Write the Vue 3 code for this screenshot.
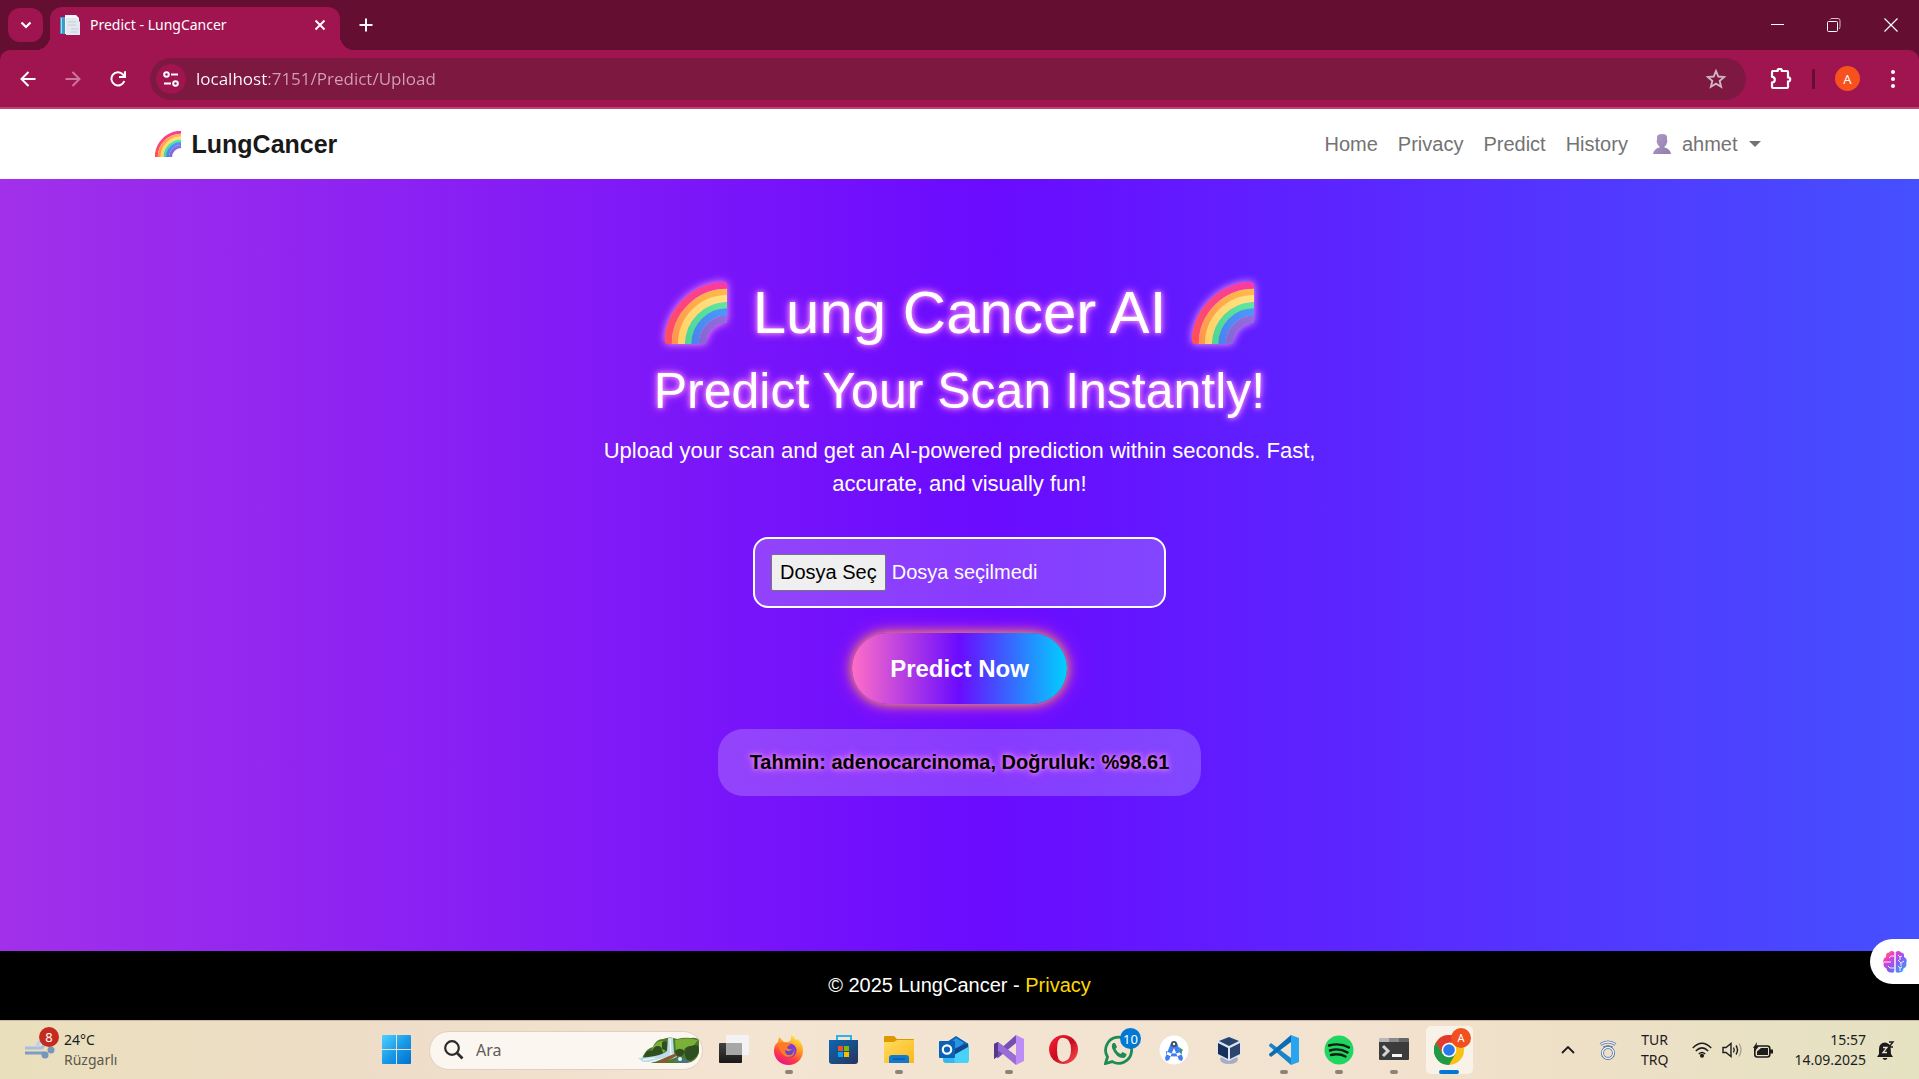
<script setup>
import { ref } from 'vue'

const address = ref('localhost:7151/Predict/Upload')
const query = ref('')
const links = ['Home', 'Privacy', 'Predict', 'History']
const bands = [
  { r: 57, id: 'bandRed', from: '#ff5058', to: '#f83aa8' },
  { r: 50, id: 'bandOrange', from: '#ff9250', to: '#ffbe4a' },
  { r: 44, id: 'bandYellow', from: '#ffd060', to: '#ffe488' },
  { r: 37, id: 'bandGreen', from: '#44d292', to: '#66eaa0' },
  { r: 31, id: 'bandBlue', from: '#4c78ea', to: '#4aa2ff' },
  { r: 24, id: 'bandViolet', from: '#7866cc', to: '#9c70e4' },
]
</script>

<template>
  <div class="screen">
    <svg class="defs" width="0" height="0" aria-hidden="true">
      <defs>
        <linearGradient v-for="b in bands" :id="b.id" :key="b.id" gradientUnits="userSpaceOnUse" x1="0" y1="60" x2="60" y2="0">
          <stop offset="0" :stop-color="b.from" /><stop offset="1" :stop-color="b.to" />
        </linearGradient>
        <symbol id="rainbow" viewBox="0 0 60 60">
          <circle v-for="b in bands" :key="b.id" cx="60" cy="60" :r="b.r" fill="none" :stroke="`url(#${b.id})`" stroke-width="7" />
        </symbol>
      </defs>
    </svg>

    <div class="tabstrip">
      <button class="tab-search" aria-label="Search tabs">
        <svg width="12" height="8" viewBox="0 0 12 8"><path d="M1.5 1.5 6 6l4.5-4.5" fill="none" stroke="#fff" stroke-width="2.2" /></svg>
      </button>
      <div class="tab">
        <svg width="20" height="20" viewBox="0 0 20 20">
          <path d="M0 2h8v17H0z" fill="#eef3f5" /><path d="M0 2h5v17H0z" fill="#3d9bc8" /><path d="M1 3h1v15H1z" fill="#a8d8ea" />
          <path d="M5 0h11l3 3v8H5z" fill="#f4f6f8" /><path d="M6 3h10l4 4v13H6z" fill="#e3e8ee" />
          <path d="M8 7h8M8 10h8M11 14h7M11 17h7" stroke="#c4ccd4" />
        </svg>
        <span class="tab-title">Predict - LungCancer</span>
        <button class="plain" aria-label="Close tab">
          <svg width="12" height="12" viewBox="0 0 12 12"><path d="m1.500 1.500 9 9m0-9-9 9" stroke="#fff" stroke-width="2" /></svg>
        </button>
      </div>
      <button class="plain new-tab" aria-label="New tab">
        <svg width="14" height="14" viewBox="0 0 14 14"><path d="M7 .5v13M.5 7h13" stroke="#fff" stroke-width="2" /></svg>
      </button>
      <div class="window-buttons">
        <button class="plain" aria-label="Minimize"><svg width="14" height="14" viewBox="0 0 14 14"><path d="M1 6.500h13" stroke="#fff" /></svg></button>
        <button class="plain" aria-label="Restore">
          <svg width="14" height="14" viewBox="0 0 14 14" fill="none" stroke="#fff"><rect x=".5" y="3.500" width="10" height="10" rx="1" /><path d="M3 1.500q.5-1 2-1h6q2 0 2 2v6q0 1.500-1 2.500" stroke="#dcb8c8" /></svg>
        </button>
        <button class="plain" aria-label="Close"><svg width="14" height="14" viewBox="0 0 14 14"><path d="m.5.5 13 13m0-13-13 13" stroke="#fff" stroke-width="1.200" /></svg></button>
      </div>
    </div>

    <div class="toolbar">
      <div class="toolbar-nav">
        <button class="plain" aria-label="Back"><svg width="16" height="16" viewBox="0 0 16 16" fill="none" stroke="#fff" stroke-width="2"><path d="M15.500 8H2M8.500 1 1.500 8l7 7" /></svg></button>
        <button class="plain" aria-label="Forward"><svg width="16" height="16" viewBox="0 0 16 16" fill="none" stroke="#cb769a" stroke-width="2"><path d="M.5 8H14M7.500 1l7 7-7 7" /></svg></button>
        <button class="plain" aria-label="Reload">
          <svg width="16" height="16" viewBox="0 0 16 16" fill="none" stroke="#fff" stroke-width="2"><path d="M14.300 10A6.600 6.600 0 1 1 13 3.500L14.500 5.500M15 .2V6H9" /></svg>
        </button>
      </div>
      <div class="omnibox">
        <button class="site-info" aria-label="Site information">
          <svg width="16" height="16" viewBox="0 0 16 16" fill="none" stroke="#fff" stroke-width="2"><circle cx="3.500" cy="3.500" r="2.300" /><path d="M8 3.500h7M1 12.500h7" /><circle cx="12.500" cy="12.500" r="2.300" /></svg>
        </button>
        <input v-model="address" class="address" type="text" aria-label="Address" spellcheck="false" />
        <button class="plain" aria-label="Bookmark this page">
          <svg width="20" height="20" viewBox="0 0 20 20"><path d="m10 2 2.300 5.500 6 .5-4.600 3.900 1.400 5.800L10 14.600l-5.100 3.100 1.400-5.800L1.700 8l6-.5z" fill="none" stroke="#cfb6c2" stroke-width="1.900" /></svg>
        </button>
      </div>
      <button class="plain" aria-label="Extensions">
        <svg width="22" height="22" viewBox="0 0 22 22"><path d="M2 3h5.500a2.200 2.200 0 0 1 4.400 0H17q1 0 1 1v5.300a2.200 2.200 0 0 1 0 4.400V19q0 1-1 1H3q-1 0-1-1v-4.300q2.800-.6 2.800-3T2 8.700V4q0-1 1-1" fill="none" stroke="#fff" stroke-width="2.200" /></svg>
      </button>
      <span class="divider"></span>
      <button class="avatar" aria-label="Profile">A</button>
      <button class="plain menu" aria-label="Menu">
        <svg width="6" height="20" viewBox="0 0 6 20" fill="#fff"><circle cx="3" cy="3" r="2" /><circle cx="3" cy="10" r="2" /><circle cx="3" cy="17" r="2" /></svg>
      </button>
    </div>

    <div class="page">
      <header class="site-header">
        <nav class="container">
          <a class="brand" href="#"><svg width="26" height="26"><use href="#rainbow" /></svg>LungCancer</a>
          <div class="nav-links">
            <a v-for="l in links" :key="l" href="#">{{ l }}</a>
            <button class="user" aria-haspopup="true">
              <svg width="20" height="20" viewBox="0 0 20 20"><defs><linearGradient id="person" x2="1" y2="1"><stop stop-color="#b09ac6" /><stop offset="1" stop-color="#927cac" /></linearGradient></defs><path d="M5 3q0-3 5-3t5 3v3q1 1 0 2.500-.5 3-2.500 4v1q5.500 1 6.500 6.500H1q1-5.500 6.500-6.500v-1Q5.500 11.500 5 8.500 4 7 5 6z" fill="url(#person)" /></svg>
              ahmet
              <span class="caret"></span>
            </button>
          </div>
        </nav>
      </header>

      <main class="hero">
        <h1><svg width="62" height="62"><use href="#rainbow" /></svg>Lung Cancer AI<svg width="62" height="62"><use href="#rainbow" /></svg></h1>
        <h2>Predict Your Scan Instantly!</h2>
        <p class="lead">Upload your scan and get an AI-powered prediction within seconds. Fast, accurate, and visually fun!</p>
        <form @submit.prevent>
          <label class="file">
            <input type="file" class="file-input" />
            <span class="file-button">Dosya Seç</span>
            <span>Dosya seçilmedi</span>
          </label>
          <button class="predict" type="submit">Predict Now</button>
        </form>
        <output class="result">Tahmin: adenocarcinoma, Doğruluk: %98.61</output>
      </main>

      <footer class="site-footer">© 2025 LungCancer -&nbsp;<a href="#">Privacy</a></footer>

      <button class="assistant" aria-label="Assistant">
        <svg width="24" height="24" viewBox="0 0 24 24">
          <defs><linearGradient id="brain" x2="1" y2="1"><stop stop-color="#ff9a2e" /><stop offset=".25" stop-color="#f43cc0" /><stop offset=".55" stop-color="#8a58f4" /><stop offset="1" stop-color="#20b4ff" /></linearGradient></defs>
          <path d="M11.300 2Q8 0 6 2.500 2.500 2.500 3 7-1 9 .8 13-.5 17 3.500 18.500 4 22.500 8 22.500q3 1 3.300-1.500zM12.700 2Q16 0 18 2.500q3.500 0 3 4.500 4 2 2.200 6 1.300 4-2.700 5.500-.5 4-4.500 4-3 1-3.300-1.500z" fill="url(#brain)" />
          <path d="M11 6H8L6 8M1 12h7m3 6H7l-2-2M15 5l2 2v3m0-3 2-1M15 10l3 3 3-2m-3 2v3m-3 0 2 2v3m0-3 2-1" fill="none" stroke="#fff" stroke-width=".9" />
        </svg>
      </button>
    </div>

    <div class="taskbar">
      <button class="weather">
        <span class="weather-icon">
          <svg width="30" height="18" viewBox="0 0 30 18" fill="none" stroke="#7f9cc4"><path d="M0 7h17q2-1 1-4" stroke="#a9bedb" stroke-width="3" /><path d="M0 12h19l3 1" stroke-width="3" /><circle cx="26" cy="9" r="3.500" fill="#7896bc" stroke="none" /><circle cx="20" cy="14" r="3.500" fill="#7896bc" stroke="none" /><path d="M12 6q1-6 6-5" stroke="#c3d1e6" stroke-width="4" /></svg>
          <span class="badge red">8</span>
        </span>
        <span class="weather-text"><span>24°C</span><span class="muted">Rüzgarlı</span></span>
      </button>

      <div class="apps">
        <button class="app" aria-label="Start">
          <svg width="30" height="30" viewBox="0 0 30 30"><defs><linearGradient id="win" gradientUnits="userSpaceOnUse" x1="0" y1="0" x2="29" y2="29"><stop stop-color="#4fd2ff" /><stop offset=".5" stop-color="#199be8" /><stop offset="1" stop-color="#0070d0" /></linearGradient></defs><path d="M0 1q0-1 1-1h13v14H0zM15 0h13q1 0 1 1v13H15zM0 15h14v14H1q-1 0-1-1zM15 15h14v13q0 1-1 1H15z" fill="url(#win)" /></svg>
        </button>
        <label class="search">
          <svg width="20" height="20" viewBox="0 0 20 20" fill="none" stroke="#2b2b2b" stroke-width="2.200"><circle cx="8" cy="8" r="6.800" /><path d="m12.800 12.800 5.700 5.700" stroke-width="2.800" /></svg>
          <input v-model="query" type="search" placeholder="Ara" aria-label="Ara" />
          <svg width="62" height="27" viewBox="0 0 62 27">
            <path d="M5 19Q9 11 15 10q3-8 10-8 7-3 14 0 7-2 14-1 7-1 8 3v12q-3 9-12 10H16L4 23z" fill="#4b7a28" />
            <path d="M14 12q4-9 11-8l3 8-4 6-8-1zM37 3q12-3 23 0l-4 5-9 3-5 7-4-3z" fill="#7ab038" />
            <path d="M6 20q2-8 8-6 3-7 9-4l3 8-8 4zM24 5q5-2 6 2l-1 7-5-2zM50 24q-4-5-3-9 0-7 7-6 7-3 7 4-1 9-11 11zM37 14q6-5 10 1l-3 4h-6z" fill="#2f4f20" />
            <path d="M30 1h5l1 15 3 4-13 5H5l-5-4q14-1 21-3 6-2 8-4z" fill="#bddbe8" />
            <path d="m32 2 1 16M5 23l12-2m-5 4 16-4" stroke="#fff" />
            <path d="m17 25 19-8 4 1-14 8z" fill="#8b5a2e" /><path d="M36 25q3-7 9-4l7 3-4 2z" fill="#477584" /><circle cx="42" cy="22" r="2" fill="#e6f4f6" />
          </svg>
        </label>
        <button class="app" aria-label="Task view">
          <svg width="30" height="30" viewBox="0 0 30 30"><defs><linearGradient id="tv" x2="0" y2="1"><stop stop-color="#424242" /><stop offset="1" stop-color="#181818" /></linearGradient></defs><rect y="8" width="23" height="20" rx="1" fill="url(#tv)" /><rect x="7" width="23" height="20" rx="1" fill="#f3f3f3" /><path d="M7 8h16v12H8l-1-1z" fill="#a7a7a7" /></svg>
        </button>
        <button class="app running" aria-label="Firefox">
          <svg width="30" height="30" viewBox="0 0 30 30"><defs><linearGradient id="ff" x1=".8" x2=".3" y2="1"><stop stop-color="#fff04a" /><stop offset=".4" stop-color="#ff9a22" /><stop offset=".7" stop-color="#ff4040" /><stop offset="1" stop-color="#e8108c" /></linearGradient></defs><path d="M4 7 5 2l5 5h3q5 0 4-7 4 2 5 5l2-1q5 5 5 12a14.500 14 0 0 1-29 0Q0 10 4 7z" fill="url(#ff)" /><circle cx="15.500" cy="15.500" r="7" fill="#7a3ae0" /><path d="M4 8q8-2 13 2-3 0-4 3 5 3 7 0 2 9-6 9Q6 21 4 8z" fill="#ff7a28" /><path d="M11 15q5 3 9-2 0 8-6 7-3-1-3-5z" fill="#5a48d4" /></svg>
        </button>
        <button class="app" aria-label="Microsoft Store">
          <svg width="30" height="30" viewBox="0 0 30 30"><defs><linearGradient id="st" x2="1" y2="1"><stop stop-color="#0d66b4" /><stop offset="1" stop-color="#27345c" /></linearGradient></defs><path d="M8 7V1h14v6" fill="none" stroke="#28b4f0" stroke-width="2" /><path d="M0 5h29v21q0 3-3 3H3q-3 0-3-3z" fill="url(#st)" /><path d="M9 11h5v5H9z" fill="#f25022" /><path d="M15 11h5v5h-5z" fill="#7fba00" /><path d="M9 17h5v5H9z" fill="#00a4ef" /><path d="M15 17h5v5h-5z" fill="#ffb900" /></svg>
        </button>
        <button class="app running" aria-label="File Explorer">
          <svg width="30" height="30" viewBox="0 0 30 30"><defs><linearGradient id="fe" x2="1" y2="1"><stop stop-color="#ffdc62" /><stop offset="1" stop-color="#fbb818" /></linearGradient></defs><path d="M0 2q0-1 1-1h9l3 3h16q1 0 1 1v8H0z" fill="#dc9a00" /><path d="M0 7h10l3-2h17v23H1q-1 0-1-1z" fill="url(#fe)" /><path d="M5 28v-5q0-3 3-3h14q3 0 3 3v5z" fill="#1379cc" /><path d="M9 24h12" stroke="#0a4d92" /></svg>
        </button>
        <button class="app" aria-label="Outlook">
          <svg width="30" height="30" viewBox="0 0 30 30"><path d="m4 9 13-7 12 7v17q0 2-2 2H7q-3 0-3-3z" fill="#35b8f0" /><path d="m5 9 12-8 11 7-14 12z" fill="#0c62b8" /><path d="m11 8 6-5 8 5-9 7z" fill="#2896e0" /><path d="M14 19 30 9v16q0 3-3 3H16z" fill="#48d2fa" /><path d="M15 14 29 8v4l-14 8z" fill="#114690" /><rect y="6" width="16" height="17" rx="1" fill="#0a62b8" /><circle cx="8" cy="14.500" r="4.200" fill="none" stroke="#fff" stroke-width="2.200" /></svg>
        </button>
        <button class="app running" aria-label="Visual Studio">
          <svg width="30" height="30" viewBox="0 0 30 30"><path d="m0 9 4-2 18 14v8L4 14v7l-4 3z" fill="#6944a8" /><path d="m0 21 4 2L22 8V0L4 16z" fill="#7450b4" /><path d="m0 9 4-2v14l-4 3z" fill="#58388f" /><path d="m4 7 18 14v9L4 15z" fill="#9a6cd8" /><path d="m22 0 8 4v22l-8 4z" fill="#bd8cf6" /></svg>
        </button>
        <button class="app" aria-label="Opera">
          <svg width="30" height="30" viewBox="0 0 30 30"><defs><linearGradient id="op" x2="1" y2="1"><stop stop-color="#ff2032" /><stop offset=".5" stop-color="#c80c20" /><stop offset="1" stop-color="#ff5454" /></linearGradient></defs><path d="M14.500 0a14.500 14.500 0 1 0 .1 0zm.5 3q7 1 7 11.500T15 26.500 8 14.500 15 3z" fill="url(#op)" fill-rule="evenodd" /></svg>
        </button>
        <button class="app" aria-label="WhatsApp">
          <svg width="30" height="30" viewBox="0 0 30 30"><path d="M1.500 28.500 3.500 22a13 13 0 1 1 4.800 4.600z" fill="none" stroke="#1c8c54" stroke-width="2.800" /><path d="M9 8h2l2 4-1.500 2q2 4 5 5l2-2 4 2q0 3-3 4Q12 23 8 13q-1-3 1-5z" fill="#1c8c54" /></svg>
          <span class="badge blue">10</span>
        </button>
        <button class="app" aria-label="Android Studio">
          <svg width="30" height="30" viewBox="0 0 30 30"><circle cx="15" cy="15" r="14.500" fill="#fff" /><path d="m20 12 4 3-3 4z" fill="#2f9d58" /><path d="m12 8-6 15 1 3 3-1 5-12 5 12 3 1 1-3-6-15zM7 16q8 5 16 0v3q-8 5-16 0z" fill="#3f7df0" /><circle cx="15" cy="9" r="3" fill="#394d60" /><circle cx="15" cy="9" r="1.200" fill="#fff" /></svg>
        </button>
        <button class="app" aria-label="VirtualBox">
          <svg width="30" height="30" viewBox="0 0 30 30"><path d="m6 23 9-4 9 4q0 6-9 6t-9-6z" fill="#a5aec2" /><path d="m15 1 12 5v14l-12 6-12-6V6z" fill="#dfe4f0" /><path d="m15 2 10 4-10 5L5 6z" fill="#27456c" /><path d="m4 8 10 5v11L4 19z" fill="#16305a" /><path d="m26 8-10 5v11l10-5z" fill="#2c456e" /></svg>
        </button>
        <button class="app running" aria-label="Visual Studio Code">
          <svg width="30" height="30" viewBox="0 0 30 30"><path d="m0 10 2-2 20 15v7L0 11z" fill="#1784cc" /><path d="m0 20 2 2L22 7V0L0 19z" fill="#0a6cb4" /><path d="m22 0 8 3v24l-8 3z" fill="#2ba4f0" /></svg>
        </button>
        <button class="app running" aria-label="Spotify">
          <svg width="30" height="30" viewBox="0 0 30 30"><circle cx="15" cy="15" r="14.500" fill="#1fd660" /><path d="M5 10.500q11-3 20 2M6 15.500q9-3 17.500 2M7 20q8-2 14.500 1.500" fill="none" stroke="#131a14" stroke-width="2.400" stroke-linecap="round" /></svg>
        </button>
        <button class="app running" aria-label="Terminal">
          <svg width="30" height="30" viewBox="0 0 30 30"><path d="M0 7h30v17q0 1-1 1H1q-1 0-1-1z" fill="#3c3c3c" /><path d="M0 4q0-1 1-1h9v4H0z" fill="#b8b8b8" /><path d="M10 3h10v4H10z" fill="#8a8a8a" /><path d="M20 3h9q1 0 1 1v3H20z" fill="#666" /><path d="m4 11 5 5-5 5" fill="none" stroke="#d4d4d4" stroke-width="3" /><path d="M13 20.500h10" stroke="#f5f5f5" stroke-width="3" /></svg>
        </button>
        <button class="app active" aria-label="Google Chrome">
          <svg width="30" height="30" viewBox="0 0 30 30"><circle cx="15" cy="15" r="15" fill="#f9c112" /><path d="M2 7.500A15 15 0 0 1 28 7.500H15z" fill="#e23a2e" /><path d="M2 7.500A15 15 0 0 0 15 30l6.500-11.200H8.500z" fill="#229944" /><path d="M2 7.500 8.500 18.800 15 7.500 8 2z" fill="#e23a2e" /><path d="M2 7.500 8.500 18.800 15 22 10 29.200A15 15 0 0 1 2 7.500z" fill="#229944" /><circle cx="15" cy="15" r="7.300" fill="#fff" /><circle cx="15" cy="15" r="5.800" fill="#2878ec" /></svg>
          <span class="badge orange">A</span>
        </button>
      </div>

      <div class="tray">
        <button class="plain" aria-label="Show hidden icons"><svg width="14" height="8" viewBox="0 0 14 8"><path d="m1 7 6-6 6 6" fill="none" stroke="#1c1c1c" stroke-width="1.800" /></svg></button>
        <button class="plain" aria-label="Device">
          <svg width="18" height="20" viewBox="0 0 18 20" fill="none"><circle cx="9" cy="13" r="5.500" stroke="#4e6c9c" stroke-width="3" /><circle cx="9" cy="13" r="5.500" stroke="#eef3fa" stroke-width="1.400" /><path d="M1.500 4.500q7.500-5 15 0" stroke="#5c78a4" stroke-width="3" /><path d="M4 7q5-3 10 0" stroke="#5c78a4" /><path d="M1.500 4.500q7.500-5 15 0" stroke="#eef3fa" stroke-width="1.400" /></svg>
        </button>
        <button class="language"><span>TUR</span><span>TRQ</span></button>
        <button class="status" aria-label="Network, volume and battery">
          <svg width="20" height="16" viewBox="0 0 20 16" fill="none" stroke="#1c1c1c" stroke-width="1.500"><path d="M.8 6q9.200-9.500 18.400 0M3.800 9q6.200-6.200 12.400 0M6.800 12q3.200-3 6.400 0" /><circle cx="10" cy="13.700" r="1.300" fill="#1c1c1c" /></svg>
          <svg width="21" height="16" viewBox="0 0 21 16" fill="none" stroke="#1c1c1c" stroke-width="1.400"><path d="M1 5.500h3l5-4v13l-5-4H1zM11.500 5.500q1.500 2.500 0 5M14 3.500q3 4.500 0 9" /><path d="M17 1.500q4 6.500 0 13" stroke="#aba796" /></svg>
          <svg width="21" height="17" viewBox="0 0 21 17"><rect x="1.800" y="4" width="15" height="11" rx="2.500" fill="none" stroke="#1c1c1c" stroke-width="1.600" /><path d="M4 9.500 8 6h7v7H4zM17 7.500h3v4h-3z" fill="#1c1c1c" /><path d="M4 0 0 6h2.500L1.500 10 6 4H3.500z" fill="#1c1c1c" /></svg>
        </button>
        <button class="clock"><span>15:57</span><span>14.09.2025</span></button>
        <button class="plain" aria-label="Notifications">
          <svg width="18" height="19" viewBox="0 0 18 19"><path d="M2 13V8q0-6 6-6.500 4 .5 5.500 3.500l.5 8 2 3H0zM5.500 17h5q-1 2-2.500 2t-2.500-2z" fill="#1c1c1c" /><path d="M12 1h4l-4 5h4" fill="none" stroke="#1c1c1c" stroke-width="1.400" /><path d="M6 6.500h4l-4 5h4" fill="none" stroke="#e8e4cc" stroke-width="1.300" /></svg>
        </button>
      </div>
    </div>
  </div>
</template>

<style>
body {
  margin: 0;
}
</style>

<style scoped>
* {
  box-sizing: border-box;
}
.screen {
  min-height: 100vh;
  display: flex;
  flex-direction: column;
  font-family: "Liberation Sans", Arial, sans-serif;
  font-size: 20px;
}
.defs {
  position: absolute;
}
button {
  font: inherit;
  color: inherit;
  border: 0;
  padding: 0;
  background: none;
}
svg {
  display: block;
  flex: none;
}
a {
  color: inherit;
  text-decoration: none;
}
.plain {
  display: flex;
  align-items: center;
  justify-content: center;
}

/* Browser chrome */
.tabstrip,
.toolbar,
.taskbar {
  font-family: "Noto Sans", "Open Sans", sans-serif;
}
.tabstrip {
  height: 50px;
  display: flex;
  align-items: center;
  padding-left: 8px;
  background: #640e32;
}
.tab-search {
  width: 35px;
  height: 34px;
  display: grid;
  place-items: center;
  border-radius: 12px;
  background: #a0144f;
}
.tab {
  position: relative;
  align-self: flex-end;
  width: 290px;
  height: 43px;
  margin-left: 7px;
  padding: 0 14px 8px 10px;
  display: flex;
  align-items: center;
  gap: 10px;
  border-radius: 12px 12px 0 0;
  background: #a0144f;
  color: #fff;
  font-size: 14px;
}
.tab::before,
.tab::after {
  content: "";
  position: absolute;
  bottom: 0;
  width: 14px;
  height: 14px;
}
.tab::before {
  right: 100%;
  background: radial-gradient(circle at 0 0, transparent 14px, #a0144f 14px);
}
.tab::after {
  left: 100%;
  background: radial-gradient(circle at 100% 0, transparent 14px, #a0144f 14px);
}
.tab-title {
  flex: 1;
}
.new-tab {
  margin-left: 19px;
}
.window-buttons {
  margin-left: auto;
  display: flex;
}
.window-buttons .plain {
  width: 57px;
}
.toolbar {
  height: 59px;
  display: flex;
  align-items: center;
  border-bottom: 2px solid #bc4472;
  border-radius: 10px 10px 0 0;
  background: #a0144f;
  box-shadow: 0 -10px #640e32;
  padding-right: 23px;
}
.tabstrip {
  position: relative;
  z-index: 1;
}
.toolbar-nav {
  width: 150px;
  padding-left: 20px;
  display: flex;
  gap: 29px;
}
.omnibox {
  flex: 1;
  height: 42px;
  padding: 0 20px 0 6px;
  display: flex;
  align-items: center;
  border-radius: 21px;
  background: #7d1841;
  margin-right: 24px;
}
.site-info {
  width: 30px;
  height: 30px;
  display: grid;
  place-items: center;
  border-radius: 50%;
  background: #a0144f;
}
.address {
  flex: 1;
  margin-left: 10px;
  padding: 0;
  border: 0;
  outline: 0;
  font-family: "Open Sans", "Noto Sans", sans-serif;
  font-size: 17px;
  color: transparent;
  background: linear-gradient(90deg, #fff 71px, #d3a0b6 71px);
  background-clip: text;
}
.divider {
  width: 3px;
  height: 20px;
  margin: 0 20px;
  border-radius: 1px;
  background: #640e32;
}
.avatar {
  width: 25px;
  height: 25px;
  border-radius: 50%;
  background: #f7511d;
  color: #fff;
  font-size: 13px;
}
.menu {
  margin-left: 30px;
}

/* Site */
.page {
  position: relative;
  flex: 1;
  display: flex;
  flex-direction: column;
}
.site-header {
  background: #fff;
  color: #737373;
}
.container {
  max-width: 1650px;
  height: 70px;
  margin: 0 auto;
  padding: 0 24px 0 20px;
  display: flex;
  align-items: center;
  justify-content: space-between;
}
.brand {
  display: flex;
  align-items: center;
  gap: 11px;
  font-size: 25px;
  font-weight: 700;
  color: #191919;
}
.nav-links {
  display: flex;
  align-items: center;
  gap: 20px;
}
.user {
  display: flex;
  align-items: center;
  gap: 10px;
  margin-left: 4px;
}
.caret {
  margin-left: 1px;
  border: 6px solid transparent;
  border-top-color: #737373;
  border-bottom: 0;
}
.hero {
  flex: 1;
  display: flex;
  flex-direction: column;
  align-items: center;
  padding: 98px 24px 154px;
  color: #fff;
  background: linear-gradient(90deg, #ff6ec7, #6a0bff, #00d0ff) 49% 0 / 275% 100%;
}
h1,
h2,
p {
  margin: 0;
  font-weight: 400;
}
h1,
h2 {
  line-height: 1.2;
  text-align: center;
  text-shadow: 0 0 5px #ff9df5, 0 0 10px #f070ff;
}
h1 {
  display: flex;
  align-items: center;
  gap: 26px;
  margin-bottom: 12px;
  font-size: 60px;
}
h1 svg {
  border-radius: 3px;
  filter: drop-shadow(0 0 4px #ff9df5);
}
h2 {
  margin-bottom: 13px;
  font-size: 50px;
}
.lead {
  max-width: 750px;
  margin-bottom: 37px;
  font-size: 22px;
  line-height: 33px;
  text-align: center;
}
form {
  display: flex;
  flex-direction: column;
  align-items: center;
  gap: 25px;
  margin-bottom: 25px;
}
.file {
  position: relative;
  width: 413px;
  height: 71px;
  padding: 0 16px;
  display: flex;
  align-items: center;
  gap: 6px;
  border: 2px solid #fff;
  border-radius: 15px;
  background: rgba(255, 255, 255, 0.2);
}
.file-input {
  position: absolute;
  inset: 0;
  opacity: 0;
}
.file-button {
  padding: 0 8px;
  line-height: 35px;
  border: 1px solid #767676;
  border-radius: 2px;
  background: #efefef;
  color: #000;
}
.predict {
  padding: 0 38px;
  line-height: 71px;
  border-radius: 36px;
  font-size: 24px;
  font-weight: 700;
  background: linear-gradient(90deg, #ff6ec7, #6a0bff, #00d0ff);
  box-shadow: 0 0 12px #ffb030, 0 0 25px #c01cf0;
}
.result {
  padding: 0 32px;
  line-height: 67px;
  border-radius: 25px;
  background: rgba(255, 255, 255, 0.2);
  color: #000;
  font-weight: 700;
  text-shadow: 0 0 5px #ff9df5, 0 0 10px #e860ff;
}
.site-footer {
  height: 69px;
  display: flex;
  align-items: center;
  justify-content: center;
  background: #000;
  color: #fff;
}
.site-footer a {
  color: #ffd700;
}
.assistant {
  position: absolute;
  right: 0;
  bottom: 36px;
  width: 49px;
  height: 45px;
  padding-left: 13px;
  border-radius: 23px 0 0 23px;
  background: #fff;
}

/* Taskbar */
.taskbar {
  height: 59px;
  display: flex;
  align-items: center;
  border-top: 1px solid #c9b8a6;
  background: linear-gradient(90deg, #e9dfbc, #eeddc8 20%, #f4e4d2 40%, #f2e2d0 70%, #efe0c8 80%, #e5e2c2);
  color: #1c1c1c;
  font-size: 14px;
  line-height: 20px;
}
.weather {
  flex: 1;
  padding-left: 25px;
  display: flex;
  align-items: center;
  gap: 9px;
}
.weather-icon {
  position: relative;
}
.weather-text,
.language,
.clock {
  display: flex;
  flex-direction: column;
}
.weather-text {
  text-align: left;
}
.muted {
  color: #5b574c;
}
.badge {
  position: absolute;
  display: grid;
  place-items: center;
  width: 20px;
  height: 20px;
  border-radius: 50%;
  color: #fff;
  font-size: 13px;
}
.red {
  left: 14px;
  top: -14px;
  background: #c42b1c;
}
.blue {
  right: 6px;
  top: 6px;
  width: 21px;
  height: 21px;
  background: #0078d4;
}
.orange {
  right: 6px;
  top: 6px;
  background: #f2501e;
  font-size: 11px;
}
.apps {
  display: flex;
  align-items: center;
}
.app {
  position: relative;
  width: 55px;
  height: 56px;
  display: grid;
  place-items: center;
}
.app svg {
  z-index: 1;
}
.app .badge {
  z-index: 2;
}
.running::after,
.active::after {
  content: "";
  position: absolute;
  bottom: 4px;
  width: 8px;
  height: 4px;
  border-radius: 2px;
  background: #8a8378;
}
.active::after {
  width: 20px;
  background: #0078d4;
}
.active::before {
  content: "";
  position: absolute;
  inset: 4px;
  border-radius: 5px;
  background: #f9f2e8;
}
.search {
  width: 274px;
  height: 39px;
  margin: 0 4px;
  padding: 0 2px 0 14px;
  display: flex;
  align-items: center;
  border: 1px solid #e0d0c0;
  border-radius: 20px;
  background: #fbf6f0;
}
.search input {
  flex: 1;
  min-width: 0;
  margin-left: 12px;
  padding: 0;
  border: 0;
  outline: 0;
  background: none;
  font: inherit;
  font-size: 16px;
}
.search input::placeholder {
  color: #5e5c58;
}
.tray {
  margin-left: 84px;
  padding-right: 24px;
  display: flex;
  align-items: center;
}
.tray > * + * {
  margin-left: 24px;
}
.tray .status {
  display: flex;
  align-items: center;
  gap: 10px;
}
.tray .clock {
  margin-left: 20px;
  text-align: right;
}
.tray .clock + * {
  margin-left: 11px;
}
</style>
